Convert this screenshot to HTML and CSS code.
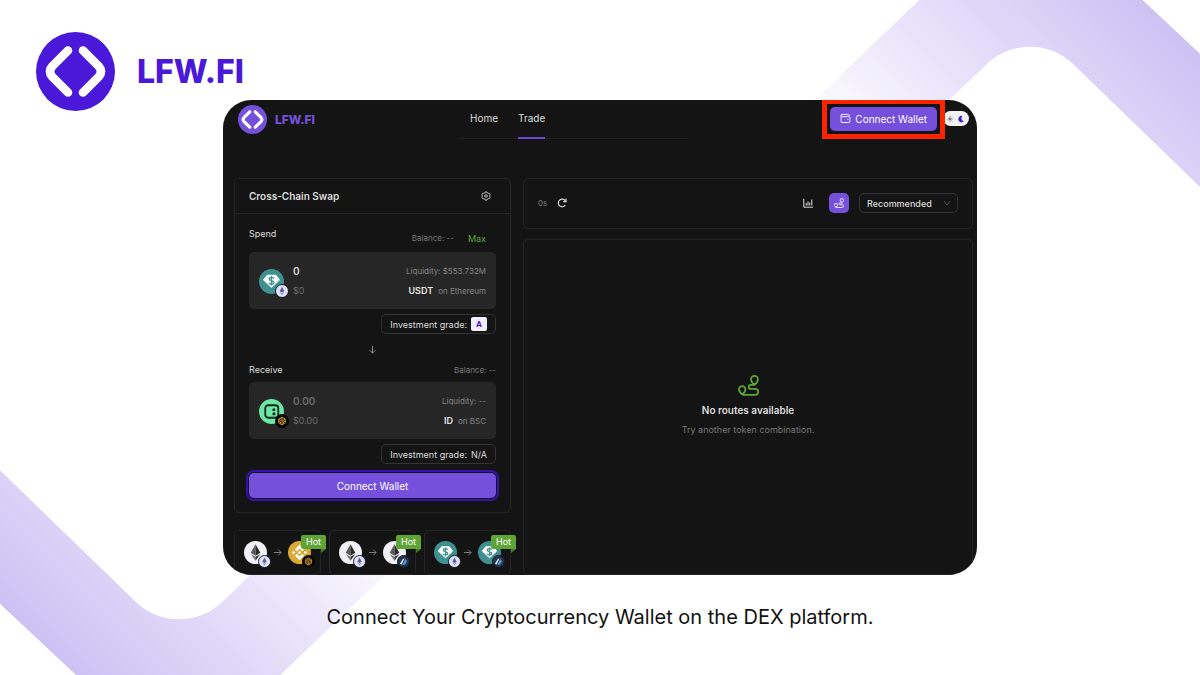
FILE: index.html
```html
<!DOCTYPE html>
<html lang="en">
<head>
  <meta charset="UTF-8">
  <meta name="viewport" content="width=device-width, initial-scale=1">
  <title>LFW.FI - Connect Wallet</title>
  <link rel="stylesheet" href="styles.css">
</head>
<body>
  <!-- Shared icons -->
  <svg class="sprite" aria-hidden="true">
    <symbol id="logo" viewBox="0 0 79 79">
      <circle cx="39.5" cy="39.5" r="39.5" fill="currentColor"/>
      <path d="M32 18.500 16.500 34 Q11.500 39.500 16.500 45 L32 60.500 M47 18.500 62.500 34 Q67.500 39.500 62.500 45 L47 60.500" fill="none" stroke="#fff" stroke-width="8.600" stroke-linecap="round" stroke-linejoin="round"/>
    </symbol>
    <symbol id="route" viewBox="0 0 20 20">
      <path d="M15.700 9.300C13.300 7.200 12.400 5.800 12.400 4.200a3.300 3.300 0 0 1 6.600 0c0 1.600-.9 3-3.300 5.100zM15.700 9.500h-3.600a1.900 1.900 0 0 0 0 3.800h4.300a2.800 2.800 0 0 1 0 5.600H5M4 18.500C1.700 16.500.9 15.300.9 13.700a3.100 3.100 0 0 1 6.200 0c0 1.600-.8 2.800-3.100 4.800z" fill="none" stroke="currentColor" stroke-width="1.700" stroke-linejoin="round" stroke-linecap="round"/>
    </symbol>
    <symbol id="arrow" viewBox="0 0 10 10">
      <path d="M1 5h8M5.800 1.800 9 5 5.800 8.200" fill="none" stroke="currentColor" stroke-width="1"/>
    </symbol>
    <symbol id="usdt" viewBox="0 0 24 24">
      <circle cx="12" cy="12" r="12" fill="#3f9191"/>
      <path d="M8 6h8l3.500 4.500-7.500 7-7.500-7z" fill="#fff" stroke="#fff" stroke-linejoin="round"/>
      <path d="M14.300 9.200c-.4-.8-1.200-1.200-2.300-1.200-1.300 0-2.300.6-2.300 1.600 0 2.300 4.700 1 4.700 3.300 0 1-1 1.700-2.400 1.700-1.200 0-2.100-.5-2.500-1.400M12 6.800v9" fill="none" stroke="#3f9191" stroke-width="1.300"/>
    </symbol>
    <symbol id="eth" viewBox="0 0 24 24">
      <circle cx="12" cy="12" r="12" fill="#f1f0f7"/>
      <path d="M12 3.500v12l-5-3.200z" fill="#5a5a5a"/>
      <path d="M12 3.500v12l5-3.200z" fill="#2b2b2b"/>
      <path d="M7 13.500l5 3v4z" fill="#777"/>
      <path d="M17 13.500l-5 3v4z" fill="#333"/>
    </symbol>
    <symbol id="bnb" viewBox="0 0 24 24">
      <circle cx="12" cy="12" r="12" fill="#dba936"/>
      <g fill="#fff">
        <path d="M12 4l4.700 4.700-1.900 1.900L12 7.800l-2.800 2.800-1.900-1.900z"/>
        <path d="M12 20l4.700-4.700-1.900-1.900-2.800 2.800-2.800-2.800-1.900 1.900z"/>
        <path d="M12 10.200l1.800 1.800-1.800 1.800-1.800-1.800zM5.800 10.200 7.600 12l-1.800 1.800L4 12zM18.200 10.200 20 12l-1.800 1.800-1.800-1.800z"/>
      </g>
    </symbol>
    <symbol id="spaceid" viewBox="0 0 24 24">
      <circle cx="12" cy="12" r="12" fill="#6ee7a5"/>
      <rect x="6" y="6" width="12.500" height="12" rx="2.800" fill="none" stroke="#10241a" stroke-width="1.700"/>
      <rect x="13" y="9" width="2.600" height="2.500" rx=".5" fill="#10241a"/>
      <rect x="13" y="13" width="2.600" height="2.500" rx=".5" fill="#10241a"/>
    </symbol>
    <symbol id="net-eth" viewBox="0 0 14 14">
      <circle cx="7" cy="7" r="6.500" fill="#dfe1fb" stroke="#17181f"/>
      <path d="M7 2.800 9.300 7.200 7 8.500 4.700 7.200z" fill="#5a5c92"/>
      <path d="M4.800 8.100 7 9.400l2.200-1.300L7 11.300z" fill="#8185b8"/>
    </symbol>
    <symbol id="net-bsc" viewBox="0 0 14 14">
      <circle cx="7" cy="7" r="7" fill="#070707"/>
      <path d="M7 3.200 10.300 5.100v3.800L7 10.800 3.700 8.900V5.100zM4 5.300 7 7l3-1.700M7 7v3.500M5.400 4.300 7 5.300l1.600-1M4 7l1.500 1v1.700M10 7 8.500 8v1.700" fill="none" stroke="#d6a22c" stroke-width=".9"/>
    </symbol>
    <symbol id="net-arb" viewBox="0 0 14 14">
      <circle cx="7" cy="7" r="6.500" fill="#26344c" stroke="#141820"/>
      <path d="M3.200 9.500 5.800 5q.8-1.300 2.200-1.200L5 10.200z" fill="#e8f0f8"/>
      <path d="M5.800 10.600 9 4.300q1.600 1 1.500 3L8.500 10.500z" fill="#4b9be0"/>
    </symbol>
  </svg>

  <svg class="waves" viewBox="0 0 1200 675" preserveAspectRatio="xMidYMid slice" aria-hidden="true">
    <defs>
      <linearGradient id="fade" gradientUnits="userSpaceOnUse" x1="20" y1="624" x2="240" y2="404">
        <stop offset="0" stop-color="#cdc1f4"/>
        <stop offset=".3" stop-color="#dcd2f7"/>
        <stop offset=".62" stop-color="#e9e4fa"/>
        <stop offset="1" stop-color="#fcfbff"/>
      </linearGradient>
      <path id="wave" d="M-20 451 136 602C159 625 199 625 222 602L340 490H474L250 704H107L-20 585z" fill="url(#fade)"/>
    </defs>
    <use href="#wave"/>
    <use href="#wave" transform="rotate(180 604.500 333)"/>
  </svg>

  <div class="page">
    <header class="brand">
      <svg class="brand-mark"><use href="#logo"/></svg>
      <span class="brand-name">LFW.FI</span>
    </header>

    <main class="app">
      <div class="topbar">
        <a class="app-logo" href="#">
          <svg class="app-mark"><use href="#logo"/></svg>
          <span class="app-name">LFW.FI</span>
        </a>
        <nav class="tabs">
          <a class="tab" href="#">Home</a>
          <a class="tab tab-active" href="#">Trade</a>
        </nav>
        <div class="topbar-actions">
          <button class="btn wallet-btn" type="button">
            <svg class="wallet-icon" viewBox="0 0 12 12" fill="none" stroke="currentColor"><path d="M10 4V2.500q0-1-1-1H2.200Q1.200 1.500 1.200 2.600v6.800q0 1 1 1h7.600q1 0 1-1V5q0-1-1-1H2.500q-1.300 0-1.300-1"/><path d="M8 7.200h1.200"/></svg>
            Connect Wallet
          </button>
          <label class="theme">
            <input class="theme-input" type="checkbox" aria-label="Dark theme" checked>
            <svg class="theme-icon sun" viewBox="0 0 10 10" stroke="currentColor" fill="none"><circle cx="5" cy="5" r="1.500" fill="currentColor"/><path d="M5 .8v1.400M5 7.800v1.400M.8 5h1.400M7.800 5h1.400M2 2l1 1M7 7l1 1M8 2 7 3M3 7 2 8" stroke-width=".8"/></svg>
            <svg class="theme-icon moon" viewBox="0 0 10 10"><path d="M6.800 1.200A4 4 0 1 0 8.500 7.900 4 4 0 0 1 6.800 1.200z" fill="currentColor"/></svg>
          </label>
        </div>
      </div>

      <div class="content">
        <div class="column">
          <section class="card swap">
            <div class="swap-header">
              <h1 class="swap-title">Cross-Chain Swap</h1>
              <button class="icon-btn" type="button" aria-label="Settings">
                <svg class="gear-icon" viewBox="0 0 12 12" fill="none" stroke="currentColor" stroke-linejoin="round"><path d="M4.800 1.200h2.400l.4 1.200 1 .5 1.300-.3 1.100 2L10.200 6l.8 1.300-1.100 2-1.300-.2-1 .5-.4 1.300H4.800l-.4-1.300-1-.5-1.300.2-1.100-2L1.800 6 1 4.600l1.100-2 1.300.3 1-.5z"/><circle cx="6" cy="6" r="1.600"/></svg>
              </button>
            </div>
            <div class="swap-body">
              <div class="field-head">
                <label class="field-label" for="spend">Spend</label>
                <div class="field-meta">
                  <span class="balance">Balance: --</span>
                  <button class="max-btn" type="button">Max</button>
                </div>
              </div>
              <div class="token-box">
                <div class="token">
                  <svg class="token-icon"><use href="#usdt"/></svg>
                  <svg class="token-net"><use href="#net-eth"/></svg>
                </div>
                <div class="amount">
                  <input class="amount-input" id="spend" type="text" value="0">
                  <div class="fiat">$0</div>
                </div>
                <div class="token-info">
                  <div>Liquidity: $553.732M</div>
                  <div><b class="symbol">USDT</b>on Ethereum</div>
                </div>
              </div>
              <div class="grade">Investment grade: <span class="grade-badge">A</span></div>
              <div class="direction"><svg class="down-icon"><use href="#arrow"/></svg></div>
              <div class="field-head field-head-small">
                <label class="field-label" for="receive">Receive</label>
                <span class="balance">Balance: --</span>
              </div>
              <div class="token-box">
                <div class="token">
                  <svg class="token-icon"><use href="#spaceid"/></svg>
                  <svg class="token-net"><use href="#net-bsc"/></svg>
                </div>
                <div class="amount">
                  <input class="amount-input" id="receive" type="text" placeholder="0.00">
                  <div class="fiat">$0.00</div>
                </div>
                <div class="token-info">
                  <div>Liquidity: --</div>
                  <div><b class="symbol">ID</b>on BSC</div>
                </div>
              </div>
              <div class="grade">Investment grade: <span>N/A</span></div>
              <button class="btn connect-btn" type="button">Connect Wallet</button>
            </div>
          </section>

          <div class="pairs">
            <a class="card pair" href="#">
              <span class="token token-sm"><svg class="token-icon"><use href="#eth"/></svg><svg class="token-net"><use href="#net-eth"/></svg></span>
              <svg class="pair-arrow"><use href="#arrow"/></svg>
              <span class="token token-sm"><svg class="token-icon"><use href="#bnb"/></svg><svg class="token-net"><use href="#net-bsc"/></svg></span>
              <span class="hot">Hot</span>
            </a>
            <a class="card pair" href="#">
              <span class="token token-sm"><svg class="token-icon"><use href="#eth"/></svg><svg class="token-net"><use href="#net-eth"/></svg></span>
              <svg class="pair-arrow"><use href="#arrow"/></svg>
              <span class="token token-sm"><svg class="token-icon"><use href="#eth"/></svg><svg class="token-net"><use href="#net-arb"/></svg></span>
              <span class="hot">Hot</span>
            </a>
            <a class="card pair" href="#">
              <span class="token token-sm"><svg class="token-icon"><use href="#usdt"/></svg><svg class="token-net"><use href="#net-eth"/></svg></span>
              <svg class="pair-arrow"><use href="#arrow"/></svg>
              <span class="token token-sm"><svg class="token-icon"><use href="#usdt"/></svg><svg class="token-net"><use href="#net-arb"/></svg></span>
              <span class="hot">Hot</span>
            </a>
          </div>
        </div>

        <div class="column routes">
          <div class="card toolbar">
            <span class="timer">0s</span>
            <button class="icon-btn" type="button" aria-label="Refresh">
              <svg class="tool-icon" viewBox="0 0 10 10" fill="none" stroke="currentColor" stroke-width="1.200"><path d="M8.200 7.200A3.800 3.800 0 1 1 8 2.500M9 .8v2.800H6.200"/></svg>
            </button>
            <div class="toolbar-right">
              <button class="icon-btn" type="button" aria-label="Chart">
                <svg class="tool-icon" viewBox="0 0 10 10" fill="none" stroke="currentColor"><path d="M.8.8v8.400H10M3.200 7.500V5M5 7.500V3.500M6.800 7.500V4.500M8.800 7.500v-6"/></svg>
              </button>
              <button class="btn route-btn" type="button" aria-label="Routes">
                <svg class="route-sm"><use href="#route"/></svg>
              </button>
              <div class="sort">
                <select class="sort-select" aria-label="Sort routes">
                  <option>Recommended</option>
                </select>
                <svg class="sort-arrow" viewBox="0 0 8 8" fill="none" stroke="currentColor"><path d="M1 2l3 4 3-4"/></svg>
              </div>
            </div>
          </div>
          <div class="card empty">
            <svg class="empty-icon"><use href="#route"/></svg>
            <h2 class="empty-title">No routes available</h2>
            <p class="empty-text">Try another token combination.</p>
          </div>
        </div>
      </div>
    </main>

    <p class="caption">Connect Your Cryptocurrency Wallet on the DEX platform.</p>
  </div>
</body>
</html>
```

FILE: styles.css
```css
* {
  box-sizing: border-box;
}
body {
  margin: 0;
  min-height: 100vh;
  position: relative;
  overflow-x: hidden;
  background: #fff;
  font-family: Inter, Arial, sans-serif;
}
svg {
  display: block;
  flex-shrink: 0;
}
a {
  color: inherit;
  text-decoration: none;
}
button, input, select {
  font-family: inherit;
  border: none;
  margin: 0;
  padding: 0;
  color: inherit;
  background: none;
}
button {
  cursor: pointer;
}
.sprite {
  position: absolute;
  width: 0;
  height: 0;
}
.waves {
  position: absolute;
  inset: 0;
  width: 100%;
  height: 100%;
}
.page {
  position: relative;
}

/* Brand */
.brand {
  display: flex;
  align-items: center;
  gap: 22px;
  padding: 32px 36px 0;
  margin-bottom: -11px;
  color: #4a18d8;
}
.brand-mark {
  width: 79px;
  height: 79px;
}
.brand-name {
  font-size: 32px;
  font-weight: 800;
  font-optical-sizing: none;
}

/* App window */
.app {
  position: relative;
  margin: 0 223px;
  border-radius: 28px;
  overflow: hidden;
  background: #141414;
  color: #dcdcdc;
  font-size: 9px;
}
.topbar {
  display: grid;
  grid-template-columns: 222fr 228fr 281fr;
  padding: 0 8px 0 15px;
}
.app-logo {
  display: flex;
  align-items: center;
  gap: 8px;
  color: #7450dc;
}
.app-mark {
  width: 29px;
  height: 29px;
}
.app-name {
  font-size: 12px;
  font-weight: 800;
}
.tabs {
  display: flex;
  gap: 20px;
  padding-left: 10px;
  border-bottom: 1px solid #202020;
  font-size: 10px;
  line-height: 37px;
}
.tab {
  margin-bottom: -1px;
  border-bottom: 2px solid transparent;
}
.tab-active {
  border-color: #6a45cf;
}
.topbar-actions {
  display: flex;
  align-items: center;
  justify-content: flex-end;
  gap: 6px;
  padding-bottom: 2px;
}
.btn {
  background: #7450dc;
  color: #fff;
  border-radius: 5px;
  font-size: 10px;
}
.wallet-btn {
  position: relative;
  z-index: 1;
  display: flex;
  align-items: center;
  gap: 4px;
  height: 24px;
  padding: 0 10px;
}
/* Highlight box around the wallet button */
.wallet-btn::after {
  content: "";
  position: absolute;
  inset: -8px;
  border: 5px solid #fc2500;
}
.wallet-icon {
  width: 11px;
  height: 11px;
}
.theme {
  display: flex;
  align-items: center;
  justify-content: space-between;
  width: 26px;
  height: 15px;
  padding: 0 4px 0 3px;
  border-radius: 8px;
  background: #f2f2f2;
  cursor: pointer;
}
.theme-input {
  position: absolute;
  opacity: 0;
}
.theme-icon {
  width: 8px;
  height: 8px;
}
.sun {
  color: #777;
}
.moon {
  color: #4418c8;
}

/* Layout */
.content {
  display: grid;
  grid-template-columns: 277fr 450fr;
  gap: 12px;
  padding: 39px 4px 0 11px;
}
.column {
  display: flex;
  flex-direction: column;
  gap: 17px;
  min-width: 0;
}
.routes {
  gap: 10px;
}
.card {
  border: 1px solid #252525;
  border-radius: 5px;
}
.icon-btn {
  display: flex;
}

/* Swap form */
.swap-header {
  display: flex;
  align-items: center;
  justify-content: space-between;
  padding: 0 19px 0 14px;
  border-bottom: 1px solid #252525;
  line-height: 34px;
}
.swap-title {
  margin: 0;
  font-size: 10px;
  font-weight: 600;
}
.gear-icon {
  width: 10px;
  height: 10px;
}
.swap-body {
  padding: 14px;
}
.field-head {
  display: flex;
  align-items: flex-start;
  justify-content: space-between;
  padding-bottom: 4px;
}
.field-head-small {
  padding-bottom: 6px;
}
.field-label {
  line-height: 12px;
}
.field-meta {
  display: flex;
  gap: 14px;
  padding-right: 10px;
  line-height: 20px;
}
.balance {
  color: #777;
  font-size: 8px;
}
.field-head-small .balance {
  line-height: 12px;
}
.max-btn {
  color: #5fa536;
  font-size: 9px;
}
.token-box {
  display: flex;
  align-items: center;
  padding: 9px 10px 8px;
  border-radius: 5px;
  background: #262626;
  line-height: 20px;
}
.token {
  position: relative;
  flex-shrink: 0;
}
.token-icon {
  width: 25px;
  height: 25px;
}
.token-net {
  position: absolute;
  right: -5px;
  bottom: -4px;
  width: 14px;
  height: 14px;
}
.amount {
  flex: 1;
  min-width: 0;
  padding-left: 9px;
}
.amount-input {
  display: block;
  width: 100%;
  height: 20px;
  font-size: 10px;
  font-weight: 600;
}
.amount-input::placeholder {
  color: #6c6c6c;
  opacity: 1;
}
.fiat {
  color: #6c6c6c;
}
.token-info {
  color: #858585;
  font-size: 8px;
  text-align: right;
}
.symbol {
  margin-right: 5px;
  color: #e8e8e8;
  font-size: 9px;
  font-weight: 600;
}
.grade {
  display: flex;
  align-items: center;
  gap: 4px;
  width: fit-content;
  height: 20px;
  margin: 5px 0 0 auto;
  padding: 0 8px;
  border: 1px solid #343434;
  border-radius: 5px;
}
.grade-badge {
  padding: 0 5px;
  border-radius: 2px;
  background: #f3ecff;
  color: #4a20b8;
  font-size: 8px;
  font-weight: 700;
  line-height: 14px;
}
.direction {
  display: flex;
  align-items: center;
  justify-content: center;
  height: 30px;
  color: #999;
}
.down-icon {
  width: 9px;
  height: 9px;
  transform: rotate(90deg);
}
.connect-btn {
  display: block;
  width: 100%;
  height: 25px;
  margin-top: 9px;
  outline: 2px solid #3512b0;
  outline-offset: 1px;
}

/* Popular pairs */
.pairs {
  display: grid;
  grid-template-columns: repeat(3, 1fr);
  gap: 8px;
}
.pair {
  position: relative;
  display: flex;
  align-items: center;
  justify-content: space-between;
  height: 45px;
  padding: 0 9px;
}
.token-sm .token-icon {
  width: 23px;
  height: 23px;
}
.token-sm .token-net {
  right: -4px;
  width: 13px;
  height: 13px;
}
.pair-arrow {
  width: 9px;
  height: 9px;
  color: #888;
}
.hot {
  position: absolute;
  top: 4px;
  right: -6px;
  padding: 0 5px;
  border-radius: 2px 2px 0 2px;
  background: #5fa536;
  color: #fff;
  line-height: 14px;
}
.hot::after {
  content: "";
  position: absolute;
  top: 100%;
  right: 0;
  border-top: 4px solid #467c27;
  border-right: 5px solid transparent;
}

/* Routes */
.toolbar {
  display: flex;
  align-items: center;
  gap: 10px;
  padding: 14px 14px 15px;
}
.timer {
  color: #777;
  font-size: 8px;
}
.tool-icon {
  width: 10px;
  height: 10px;
}
.toolbar-right {
  display: flex;
  align-items: center;
  margin-left: auto;
}
.route-btn {
  display: flex;
  align-items: center;
  justify-content: center;
  width: 20px;
  height: 20px;
  margin: 0 10px 0 16px;
}
.route-sm {
  width: 10px;
  height: 10px;
}
.sort {
  position: relative;
}
.sort-select {
  display: block;
  width: 99px;
  height: 20px;
  padding: 0 7px;
  border: 1px solid #343434;
  border-radius: 5px;
  font-size: 9px;
  font-weight: 500;
  appearance: none;
}
.sort-select option {
  background: #141414;
}
.sort-arrow {
  position: absolute;
  top: 6px;
  right: 7px;
  width: 8px;
  height: 8px;
  color: #555;
  pointer-events: none;
}
.empty {
  flex: 1;
  display: flex;
  flex-direction: column;
  align-items: center;
  justify-content: center;
}
.empty-icon {
  width: 21px;
  height: 21px;
  color: #5fa536;
}
.empty-title {
  margin: 4px 0 0;
  font-size: 10px;
  font-weight: 600;
  line-height: 20px;
}
.empty-text {
  margin: 0;
  color: #777;
  line-height: 20px;
}

.caption {
  margin: 0;
  padding: 28px 20px;
  color: #111;
  font-size: 20px;
  line-height: 28px;
  text-align: center;
}
```
